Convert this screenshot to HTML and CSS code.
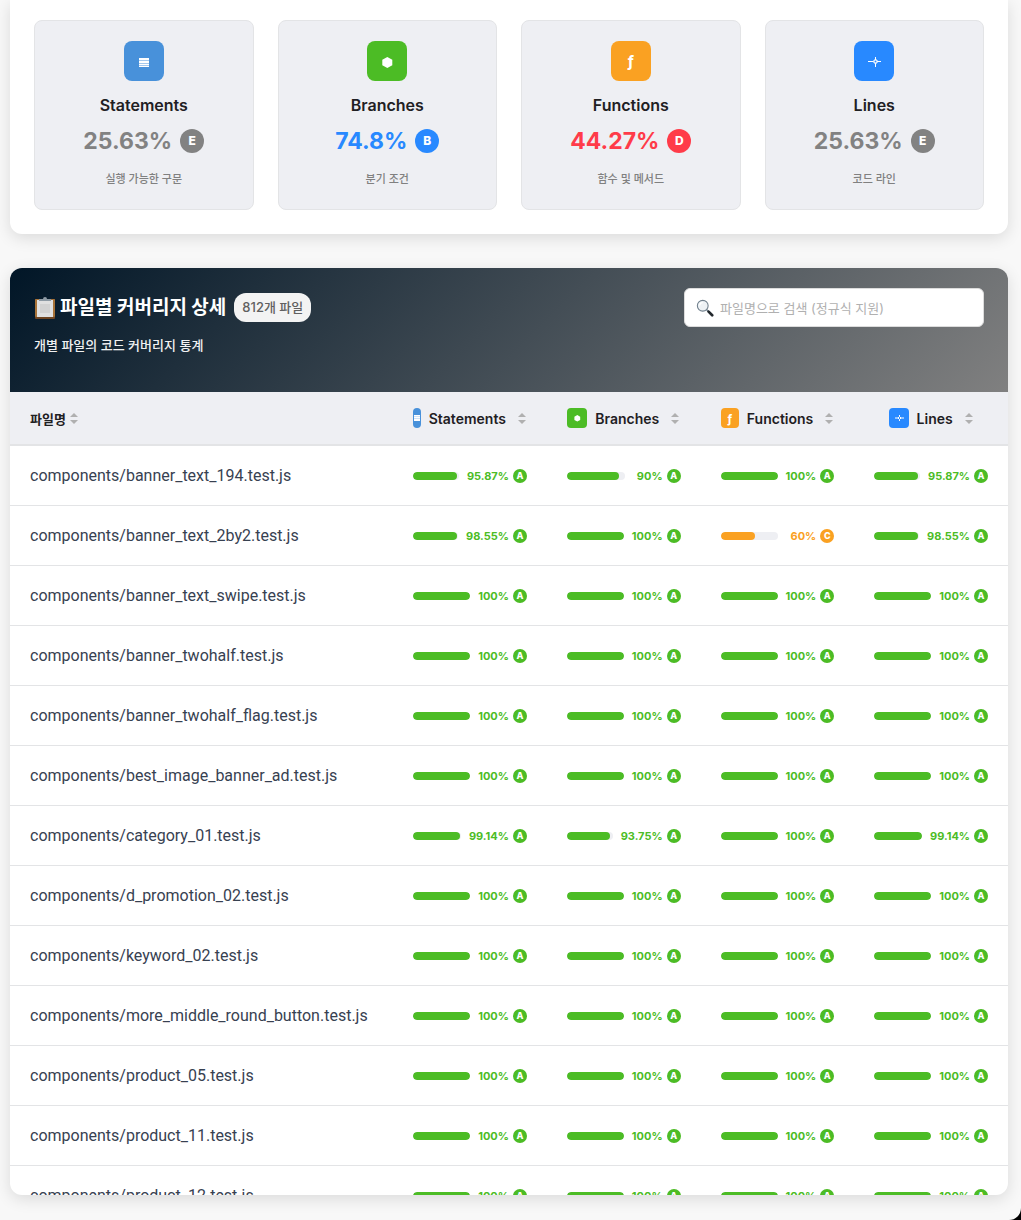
FILE: index.html
```html
<!DOCTYPE html>
<html lang="ko">
<head>
  <meta charset="UTF-8">
  <meta name="viewport" content="width=device-width, initial-scale=1.0">
  <title>Coverage Report</title>
  <link rel="stylesheet" href="styles.css">
</head>
<body>
  <section class="summary">
    <div class="metric-card">
      <div class="metric-icon statements"><svg viewBox="0 0 20 20"><path d="M5 7h10v9H5z"/><path class="shade" d="M5 9h10v1H5zM5 12h10v1H5zM5 14h10v1H5z"/></svg></div>
      <h3>Statements</h3>
      <div class="metric-value grade-e">25.63% <span class="grade">E</span></div>
      <p>실행 가능한 구문</p>
    </div>
    <div class="metric-card">
      <div class="metric-icon branches"><svg viewBox="0 0 20 20"><path d="M10.300 6l5 2.800v5.400l-5 2.800-5-2.800V8.800z"/></svg></div>
      <h3>Branches</h3>
      <div class="metric-value grade-b">74.8% <span class="grade">B</span></div>
      <p>분기 조건</p>
    </div>
    <div class="metric-card">
      <div class="metric-icon functions"><span>ƒ</span></div>
      <h3>Functions</h3>
      <div class="metric-value grade-d">44.27% <span class="grade">D</span></div>
      <p>함수 및 메서드</p>
    </div>
    <div class="metric-card">
      <div class="metric-icon lines"><svg viewBox="0 0 20 20"><path class="star" d="M4 10.500h5M13 10.500h4M11.500 6v3M11.500 12.500v3.500M11.500 8.500l.7 1.300 1.300.7-1.300.7-.7 1.300-.7-1.300-1.300-.7 1.300-.7z"/><path class="star" d="M11.500 8l2.500 2.500-2.500 2.500L9 10.500z"/></svg></div>
      <h3>Lines</h3>
      <div class="metric-value grade-e">25.63% <span class="grade">E</span></div>
      <p>코드 라인</p>
    </div>
  </section>

  <section class="files">
    <header class="files-header">
      <div class="files-title">
        <h2>
          <svg class="clipboard" viewBox="0 0 22 22">
            <rect x="1" y="2" width="20" height="20" rx="1" fill="#6f4522"/>
            <rect x="1" y="2" width="20" height="18" rx="1" fill="#a87338"/>
            <rect x="3" y="3" width="16" height="17" fill="#e0e0e0"/>
            <rect x="6" y="7" width="10" height="9" fill="#d2d2d2"/>
            <path d="M5 4V2h4q0-2 2-2t2 2h4v2z" fill="#8e9aa4"/>
          </svg>
          파일별 커버리지 상세
        </h2>
        <span class="file-count">812개 파일</span>
      </div>
      <label class="search">
        <svg viewBox="0 0 20 20" aria-label="검색">
          <path d="M12 12l2 2" stroke="#7b8a97" stroke-width="2"/>
          <path d="M14 14l4 4" stroke="#22282d" stroke-width="3" stroke-linecap="round"/>
          <circle cx="7.500" cy="7.500" r="6" fill="#eef2f5" stroke="#71808d" stroke-width="1.200"/>
          <path d="M4 7q.5-3 3.500-3" fill="none" stroke="#fff" stroke-width="1.500"/>
        </svg>
        <input type="text" placeholder="파일명으로 검색 (정규식 지원)">
      </label>
      <p>개별 파일의 코드 커버리지 통계</p>
    </header>

    <div class="table-wrap">
      <table>
        <thead>
          <tr>
            <th class="name"><button>파일명<span class="sort"></span></button></th>
            <th><button><span class="col-icon statements"><svg viewBox="0 0 14 14"><path d="M4 4h6v6H4z"/><path class="shade" d="M4 5.500h6v.5H4zM4 7.500h6V8H4z"/></svg></span>Statements<span class="sort"></span></button></th>
            <th><button><span class="col-icon branches"><svg viewBox="0 0 14 14"><path d="M7.300 4l2.900 1.700v3.200l-2.900 1.700-2.900-1.700V5.700z"/></svg></span>Branches<span class="sort"></span></button></th>
            <th><button><span class="col-icon functions">ƒ</span>Functions<span class="sort"></span></button></th>
            <th><button><span class="col-icon lines"><svg viewBox="0 0 14 14"><path class="star" d="M3 7h3M9 7h3M7.500 4v1.500M7.500 8.500V10M7.500 5.500L9 7 7.500 8.500 6 7z"/></svg></span>Lines<span class="sort"></span></button></th>
          </tr>
        </thead>
        <tbody id="file-rows"></tbody>
      </table>
    </div>
  </section>

  <script>
    // name, statements, branches, functions, lines
    const files = [
      ['banner_text_194', 95.87, 90, 100, 95.87],
      ['banner_text_2by2', 98.55, 100, 60, 98.55],
      ['banner_text_swipe', 100, 100, 100, 100],
      ['banner_twohalf', 100, 100, 100, 100],
      ['banner_twohalf_flag', 100, 100, 100, 100],
      ['best_image_banner_ad', 100, 100, 100, 100],
      ['category_01', 99.14, 93.75, 100, 99.14],
      ['d_promotion_02', 100, 100, 100, 100],
      ['keyword_02', 100, 100, 100, 100],
      ['more_middle_round_button', 100, 100, 100, 100],
      ['product_05', 100, 100, 100, 100],
      ['product_11', 100, 100, 100, 100],
      ['product_12', 100, 100, 100, 100]
    ];

    function getGrade(value) {
      if (value >= 80) return 'A';
      if (value >= 70) return 'B';
      if (value >= 50) return 'C';
      if (value >= 40) return 'D';
      return 'E';
    }

    function coverageCell(value) {
      const grade = getGrade(value);
      return `<td><div class="coverage grade-${grade.toLowerCase()}">
        <div class="bar"><div class="fill" style="width: ${value}%"></div></div>
        <span class="percent">${value}%</span><span class="grade">${grade}</span>
      </div></td>`;
    }

    document.getElementById('file-rows').innerHTML = files.map(([name, ...values]) =>
      `<tr><td class="name">components/${name}.test.js</td>${values.map(coverageCell).join('')}</tr>`
    ).join('');
  </script>
</body>
</html>
```

FILE: styles.css
```css
* {
  box-sizing: border-box;
}
html {
  background: #000;
}
body {
  display: flex;
  flex-direction: column;
  gap: 34px;
  height: 100vh;
  margin: 0;
  padding: 0 13px 25px 10px;
  overflow: hidden;
  background: #f8f8f8;
  border-bottom-right-radius: 12px;
  color: #1f2023;
  font-family: Inter, 'Noto Sans CJK KR', sans-serif;
}
h2, h3, p {
  margin: 0;
}
button {
  padding: 0;
  border: none;
  background: none;
  color: inherit;
  font: inherit;
  cursor: pointer;
}

/* summary */
.summary {
  display: grid;
  grid-template-columns: repeat(4, 1fr);
  gap: 24px;
  padding: 20px 24px 24px;
  background: #fff;
  border-radius: 0 0 12px 12px;
  box-shadow: 0 4px 16px rgba(0, 0, 0, 0.12);
}
.metric-card {
  display: flex;
  flex-direction: column;
  align-items: center;
  padding: 20px;
  background: #eeeff3;
  border: 1px solid #e3e4e6;
  border-radius: 8px;
}
.metric-icon {
  display: flex;
  justify-content: center;
  align-items: center;
  width: 40px;
  height: 40px;
  border-radius: 8px;
  color: #fff;
  font-size: 16px;
  font-weight: 700;
}
.metric-icon svg {
  width: 20px;
  height: 20px;
}
.metric-icon svg, .col-icon svg {
  fill: #fff;
}
svg .star {
  fill: none;
  stroke: #fff;
  stroke-width: 1;
}
svg .shade {
  fill: #a4c8ed;
}
.statements { background: #4891da; }
.branches { background: #4cbc25; }
.functions { background: #faa122; }
.lines { background: #2889ff; }

.metric-card h3 {
  margin-top: 12px;
  font-size: 16px;
  font-weight: 600;
  line-height: 24px;
}
.metric-value {
  display: flex;
  align-items: center;
  gap: 8px;
  margin: 8px 0 12px;
  font-size: 23px;
  font-weight: 700;
  line-height: 32px;
}
.metric-card p {
  color: #808080;
  font-size: 11px;
  font-weight: 500;
  line-height: 20px;
}
.grade {
  display: flex;
  flex: none;
  justify-content: center;
  align-items: center;
  width: 24px;
  height: 24px;
  border-radius: 50%;
  color: #fff;
  font-size: 12px;
  font-weight: 800;
}
.grade-a { color: #4cbc25; }
.grade-b { color: #2889ff; }
.grade-c { color: #faa122; }
.grade-d { color: #ff3b49; }
.grade-e { color: #828282; }
.grade-a .grade, .grade-a .fill { background: #4cbc25; }
.grade-b .grade, .grade-b .fill { background: #2889ff; }
.grade-c .grade, .grade-c .fill { background: #faa122; }
.grade-d .grade, .grade-d .fill { background: #ff3b49; }
.grade-e .grade, .grade-e .fill { background: #828282; }

/* file list */
.files {
  display: flex;
  flex: 1;
  flex-direction: column;
  min-height: 0;
  overflow: hidden;
  background: #fff;
  border-radius: 12px;
  box-shadow: 0 4px 16px rgba(0, 0, 0, 0.12);
}
.files-header {
  display: grid;
  grid-template-columns: 1fr 300px;
  row-gap: 8px;
  padding: 20px 24px 36px;
  background: linear-gradient(135deg, #011627, #808080);
  color: #fff;
}
.files-title {
  display: flex;
  align-items: center;
  gap: 8px;
}
.files-title h2 {
  display: flex;
  align-items: center;
  gap: 4px;
  font-size: 19px;
  font-weight: 700;
  line-height: 28px;
}
.clipboard {
  width: 22px;
  height: 22px;
}
.file-count {
  padding: 0 8px;
  background: #f3f3f3;
  border-radius: 12px;
  color: #606060;
  font-size: 13px;
  font-weight: 500;
  line-height: 29px;
}
.files-header p {
  color: #f0f1f2;
  font-size: 13px;
  font-weight: 500;
  line-height: 21px;
}
.search {
  display: flex;
  align-items: center;
  gap: 6px;
  height: 39px;
  padding: 0 11px;
  background: #fff;
  border: 1px solid #dcdcdc;
  border-radius: 6px;
}
.search svg {
  flex: none;
  width: 18px;
  height: 18px;
}
.search input {
  flex: 1;
  min-width: 0;
  padding: 0;
  border: none;
  outline: none;
  background: none;
  font-family: inherit;
  font-size: 13px;
}
.search input::placeholder {
  color: #b0b0b0;
}
.table-wrap {
  flex: 1;
  min-height: 0;
  overflow: hidden;
}
table {
  width: 100%;
  table-layout: fixed;
  border-collapse: separate;
  border-spacing: 0;
}
th {
  height: 54px;
  padding: 0 20px;
  background: #eeeff3;
  border-bottom: 2px solid #e3e4e6;
}
th.name {
  width: 38.4%;
  text-align: left;
}
th button {
  display: flex;
  justify-content: center;
  align-items: center;
  gap: 8px;
  width: 100%;
  font-size: 14px;
  font-weight: 600;
}
th.name button {
  justify-content: flex-start;
  gap: 0;
  font-size: 13px;
}
.col-icon {
  display: flex;
  flex: 0 1 20px;
  justify-content: center;
  align-items: center;
  min-width: 0;
  height: 20px;
  overflow: hidden;
  border-radius: 4px;
  color: #fff;
  font-size: 12px;
  font-weight: 700;
}
.col-icon svg {
  flex: none;
  width: 14px;
  height: 14px;
}
.sort {
  display: flex;
  flex: none;
  flex-direction: column;
  gap: 3px;
  margin: 0 1px 0 4px;
}
.sort::before, .sort::after {
  content: '';
  border: 4px solid transparent;
}
.sort::before {
  border-top: none;
  border-bottom-color: #b0b0b0;
}
.sort::after {
  border-bottom: none;
  border-top-color: #b0b0b0;
}
td {
  height: 60px;
  padding: 0 20px;
  border-bottom: 1px solid #e3e4e6;
}
td.name {
  color: #374151;
  font-family: Roboto, sans-serif;
  font-size: 16px;
  white-space: nowrap;
}
.coverage {
  display: flex;
  align-items: center;
  gap: 4px;
}
.bar {
  flex: 1;
  height: 8px;
  margin-right: 4px;
  overflow: hidden;
  background: #eeeff3;
  border-radius: 4px;
}
.fill {
  height: 100%;
  border-radius: 4px;
}
.percent {
  min-width: 30px;
  font-size: 11px;
  font-weight: 700;
  text-align: right;
}
.coverage .grade {
  width: 14px;
  height: 14px;
  font-size: 9px;
}
```
